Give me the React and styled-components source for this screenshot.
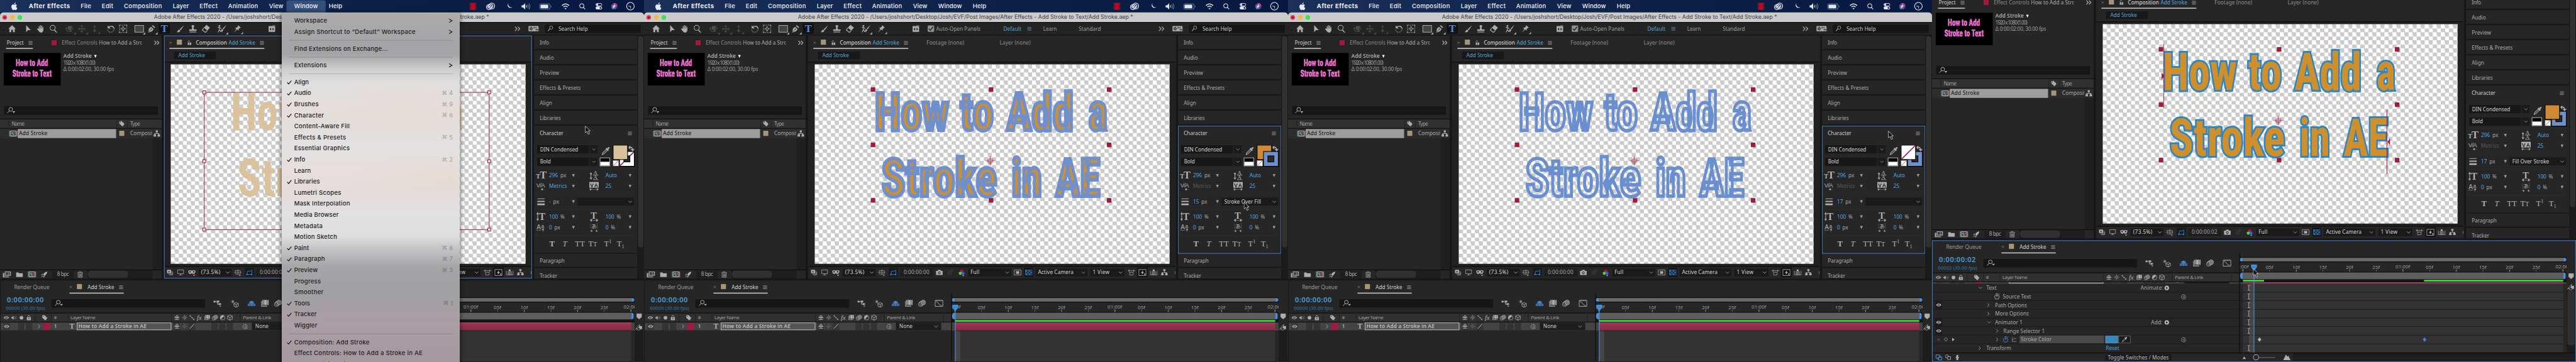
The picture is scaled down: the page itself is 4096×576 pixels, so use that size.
import React, { useLayoutEffect, useRef } from 'react';
import styled, { createGlobalStyle, css } from 'styled-components';

const Global = createGlobalStyle`
  html, body { margin: 0; padding: 0; background: #1b1b1b; overflow: hidden; }
  * { box-sizing: border-box; }
`;

const ui = "'Noto Sans', 'Open Sans', 'Liberation Sans', sans-serif";
const mac = "Inter, 'Liberation Sans', sans-serif";
const blue = '#52a5de';
const focusBlue = '#3f79bd';
const sand = '#a3967b';
const crimson = '#9e1b3c';
const soft = '#9c9c9c';

/* ---------- shared parts ---------- */

const Viewport = styled.div`
  width: 4096px;
  height: 576px;
  overflow: hidden;
`;
const Strip = styled.div`
  display: flex;
  width: 7680px;
  height: 1080px;
  transform: scale(0.533333);
  transform-origin: 0 0;
  font-family: ${ui};
`;

const steps = (x) =>
  x.map((v, i) => (i < x.length - 1 ? `${x[i + 1] - v}px` : 'minmax(0, 1fr)')).join(' ');

/* A single-line grid whose columns begin at the listed stops. */
const Track = styled.div`
  display: grid;
  grid-template-columns: ${(p) => steps(p.$x)};
  grid-template-rows: 100%;
  align-items: center;
  justify-items: start;
  padding-left: ${(p) => p.$x[0]}px;
  height: ${(p) => (p.$h ? `${p.$h}px` : '100%')};
  width: 100%;
  flex: none;
`;

const Word = styled.span`
  display: inline-block;
  flex: none;
  font-family: ${(p) => p.$f || ui};
  font-size: ${(p) => p.$s || 15.5}px;
  font-weight: ${(p) => p.$b || 400};
  color: ${(p) => p.$c || '#a9a9a9'};
  line-height: 1.3;
  white-space: pre;
  ${(p) => p.$clip && css`width: ${p.$clip}px; overflow: hidden;`}
`;

/* Text tracked so that it spans the width w. */
function T({ w, children, ...rest }) {
  const ref = useRef(null);
  useLayoutEffect(() => {
    const el = ref.current;
    if (!w || !el) return;
    el.style.letterSpacing = '0px';
    const n = el.textContent.length;
    el.style.letterSpacing = `${(w - el.offsetWidth) / n}px`;
  }, [w, children]);
  return <Word ref={ref} {...rest}>{children}</Word>;
}

const Svg = styled.svg`
  width: ${(p) => p.$w}px;
  height: ${(p) => p.$h}px;
  margin-left: ${(p) => (p.$flow ? 0 : -p.$w / 2)}px;
  color: ${(p) => p.$c};
  overflow: visible;
  flex: none;
  display: block;
`;

const Box = styled.div`
  display: flex;
  align-items: center;
  justify-content: ${(p) => p.$j || 'center'};
  width: ${(p) => p.$w}px;
  height: ${(p) => p.$h}px;
  margin-left: ${(p) => (p.$mid ? -p.$w / 2 : 0)}px;
  padding: ${(p) => p.$p || 0};
  background: ${(p) => p.$bg || '#1a1a1a'};
  border: 1px solid ${(p) => p.$line || 'transparent'};
  border-radius: ${(p) => (p.$r === undefined ? 3 : p.$r)}px;
  flex: none;
`;

const Rule = styled.i`
  width: 2px;
  height: ${(p) => p.$h || 30}px;
  background: ${(p) => p.$c || '#1a1a1a'};
  border-right: 1px solid #333;
`;

const st = (w = 2) => ({ fill: 'none', stroke: 'currentColor', strokeWidth: w });
const K = '#242424';

const icons = {
  apple: <g><path d="M16.5 12.600c0-2.500 2-3.600 2.100-3.700-1.200-1.700-3-1.900-3.600-2-1.500-.1-3 .9-3.700.9-.8 0-2-.9-3.200-.9C6.300 7 4.500 8 3.600 9.700c-1.900 3.200-.5 8 1.300 10.600.9 1.300 2 2.700 3.400 2.700 1.300-.1 1.900-.9 3.500-.9s2.100.9 3.500.8c1.500 0 2.400-1.300 3.300-2.600 1-1.500 1.500-2.900 1.500-3-.1 0-3.600-1.200-3.600-4.700z" /><path d="M14 5c.7-.9 1.200-2.200 1.100-3.500-1.100.1-2.400.8-3.200 1.700-.7.8-1.300 2.100-1.100 3.300 1.200.1 2.500-.6 3.200-1.500z" /></g>,
  film: <g><rect x="1" y="1" width="22" height="22" fill="#3b3038" /><rect x="5" y="2" width="14" height="20" fill="#c4002b" /><path d="M5 11.500h14" stroke="#5d1530" strokeWidth="1.500" /><path d="M3 3v20M21 3v20" stroke="#11131f" strokeWidth="1.800" strokeDasharray="2 2.500" /></g>,
  cloud: <g {...st(2.2)}><circle cx="8" cy="14" r="6.800" /><circle cx="15.500" cy="11" r="8" /><path d="M18.500 13.500c-1.500 2.500-5 2.500-6.500.500L8.500 11c-2-1.500-4.500.5-3.800 2.800 1 2.700 4 1.800 5.300.2" /><path d="M11 9c1.500-2.500 5-3 6.800-1 2 2.500.7 5.500-2.300 5.500" /></g>,
  moon: <path d="M9 2a9 9 0 1 0 13 13A10 10 0 0 1 9 2z" />,
  speaker: <g><path d="M0 9h4l6-6v18l-6-6H0z" /><path d="M13 9q2 3 0 6" {...st(1.8)} /><path d="M16.500 6.500q4 5.500 0 11M20 4q6 8 0 16" {...st(1.8)} opacity=".5" /></g>,
  battery: <g><rect x="1" y="4.500" width="31" height="16" rx="4.500" {...st(1.5)} opacity=".6" /><rect x="3.500" y="7" width="23" height="11" rx="2.500" /><path d="M34.500 9.500q3 3 0 6z" opacity=".6" /></g>,
  wifi: <g {...st(3)}><path d="M1.500 9.500q10.500-9.500 21 0" /><path d="M6 14q6-5.500 12 0" /><path d="M10 18.500q2-1.500 4 0l-2 2z" fill="currentColor" strokeWidth="1.500" /></g>,
  lens: <g {...st(2.4)}><circle cx="10" cy="10" r="7.500" /><path d="M15.500 15.500L22 22" /></g>,
  control: <g {...st(2)}><rect x="2" y="2.500" width="20" height="8.500" rx="4.200" /><circle cx="6.500" cy="6.700" r="2.600" fill="currentColor" /><rect x="1" y="13" width="22" height="10" rx="5" fill="currentColor" strokeWidth="0" /><circle cx="17.500" cy="18" r="3" fill="#10234a" strokeWidth="0" /></g>,
  siri: <g><circle cx="12" cy="12" r="11" fill="#5a3a7c" /><path d="M12 1a11 11 0 0 1 10 7l-10 4z" fill="#c73a8c" /><path d="M12 23a11 11 0 0 1-10-7l10-4z" fill="#2a8a9c" /><path d="M12 2l1 8 9 1-9 2 4 8-5-6-7 5 4-7-7-3 8 0z" fill="#e6e8f8" /></g>,
  clock: <g {...st(2)}><circle cx="12" cy="12" r="11" /><path d="M6 12h6.500v7" strokeWidth="1.500" /></g>,
  home: <path d="M1 12L12 1l11 11h-3v10h-5.500v-7h-5v7H4V12z" />,
  select: <path d="M6 1v21l5.500-6 8-.5z" />,
  hand: <g stroke="currentColor" strokeWidth="2.600" strokeLinecap="round" strokeLinejoin="round"><path d="M8 12V5M11.800 11V2.500M15.500 11V3.500M19 12V7" /><path fill="currentColor" d="M8 12h11v3c-.5 4-2 7-5.500 7s-5-2-6.500-4.500L3 12.500c1.500-1 3 .5 5 2z" /></g>,
  zoom: <g {...st(2)}><circle cx="10" cy="9" r="7.500" /><path d="M15 15l7 8" strokeWidth="3" /></g>,
  find: <g {...st(2)}><circle cx="14" cy="8" r="6" /><path d="M10 12l-8 9" strokeWidth="2.500" /></g>,
  findMenu: <g><g {...st(2)}><circle cx="12" cy="8" r="6" /><path d="M8 12l-7 8" /></g><path d="M17 14h10l-5 6z" /></g>,
  orbit: <g><circle cx="12" cy="10" r="6" /><path d="M2 11c0 9 9 10 13 8M14 5c6-1 9 5 6 9" {...st(2)} /><path d="M14 14v8l6-4z" /><path d="M0 12l2.500-5 3 5z" /></g>,
  pan: <path d="M12 0l4 5.500h-3V11h5.500V8L24 12l-5.500 4v-3H13v5.500h3L12 24l-4-5.500h3V13H5.500v3L0 12l5.500-4v3H11V5.500H8z" />,
  dolly: <path d="M12 0l4 6h-3v10h5l-6 8-6-8h5V6H8z" />,
  rotate: <g><path d="M3 2v9h9z" /><path d="M6 8c4-6 14-5 16 3" {...st(2.5)} /><path d="M22 12c0 12-16 14-19 3" {...st(2)} strokeDasharray="2 2.300" /></g>,
  anchorBox: <g><path d="M1 5V1h4M8 1h3M14 1h3M19 1h4v4M23 8v3M23 14v3M23 19v4h-4M16 23h-3M10 23H7M5 23H1v-4M1 16v-3M1 11V8" {...st(2)} /><path d="M12 4l3 3.500H9zM12 20l3-3.500H9zM4 12l3.500-3v6zM20 12l-3.500-3v6z" /><circle cx="12" cy="12" r="3.200" {...st(1.5)} /></g>,
  shape: <rect x="-1" y="2" width="26" height="20" fill="#444" stroke="currentColor" strokeWidth="1.800" />,
  pen: <g><path d="M2 23l2.500-12 6-5 7.500 7-5 6.500z" /><path d="M13 3.500L20 10l2.500-2.500L15.500 1z" /><path d="M3 22l7-8" stroke={K} strokeWidth="1.300" /><circle cx="11" cy="13" r="1.800" fill={K} /></g>,
  brush: <g><path d="M23 1L13 16l-3.500-2.500z" /><path d="M8.500 14.500l3.500 3c-1 4-6 5.500-11 4.500 3-2 3-7 7.500-7.500z" /></g>,
  stamp: <g><circle cx="12" cy="4.500" r="4" /><path d="M10 7h4l1 6.500h8V18H1v-4.500h8zM2 20h20v2.500H2z" /></g>,
  eraser: <g><path d="M13 1l10 8-7.500 8.500-10-8z" /><path d="M5.500 9.500L1 16l9 6.500 5.500-5" {...st(2)} /></g>,
  roto: <g><circle cx="5" cy="4" r="2.500" /><path d="M5 7v8l-4 7M5 15l4 6M0 9l5-1 5 4" {...st(2)} /><path d="M25 1l-8 13-3-2z" /><path d="M13 13l3 3c-1 4-4 5.500-8 5 3-2 1-7 5-8z" /></g>,
  pin: <path d="M14 0l9 8-3 1-4.500 4.500.5 5-5-4.500L1 24l7-11-4-4.500 5.500-.5 4-4z" />,
  snap: <g><path d="M2 4h10l2-2h8v20H2z" /><path d="M10 9v9l-5-4.500zM14 9v9l5-4.500z" fill={K} /><path d="M12 4h10" stroke={K} /></g>,
  check: <g><rect x="1" y="1" width="22" height="22" rx="3" /><path d="M5 12l5 5.500L19 6" stroke={K} strokeWidth="3" fill="none" /></g>,
  gears: <g><rect x="-5" y="3" width="34" height="18" rx="1" /><circle cx="4" cy="12" r="3.500" fill="none" stroke={K} strokeWidth="2.500" /><path d="M4 5.500v13M-2.500 12h13M-.5 7.500l9 9M8.500 7.500l-9 9" stroke={K} strokeWidth="1.500" /><circle cx="4" cy="12" r="2" fill="currentColor" /><path d="M15 9h9M27 15.500h-9" stroke={K} strokeWidth="2" /><path d="M15 5.500L11.500 9 15 12.500zM23 12l4 3.500-4 3.500z" fill={K} /></g>,
  burger: <path d="M2 5h20M2 12h20M2 19h20" {...st(2.6)} />,
  more: <path d="M2 4l8 8-8 8M13 4l8 8-8 8" {...st(3)} />,
  cross: <path d="M4 4l16 16M20 4L4 20" {...st(2.4)} />,
  lockOpen: <g><rect x="3" y="11" width="18" height="12" /><path d="M5 11V6c0-6 9-6 9 0" {...st(2.5)} /><rect x="10.500" y="14" width="3" height="6" fill={K} /></g>,
  lock: <g><rect x="3" y="10" width="18" height="13" /><path d="M7 10V6c0-5.500 10-5.500 10 0v4" {...st(2.5)} /><rect x="10.500" y="13" width="3" height="6" fill={K} /></g>,
  tag: <g><path d="M2 3l9-2 12 12-8 10L2 11z" /><circle cx="6" cy="6" r="2" fill="#303030" /></g>,
  compItem: <g><rect x="-3" y="1" width="30" height="22" fill="#aaa" /><path d="M0 2v21M24 2v21" stroke="#303030" strokeWidth="3" strokeDasharray="3 2.500" /><rect x="3.500" y="4" width="17" height="15" fill="#303030" /><circle cx="9" cy="10" r="4" fill="#4aa0e0" /><rect x="13" y="6" width="7" height="8" fill="#c62b48" /><path d="M7 18l5-9 5 9z" fill="#3fc04a" stroke="#303030" /></g>,
  flow: <path d="M8 0h8v7h-3v4h8v4h3v8h-9v-8h3v-2H6v2h3v8H0v-8h3v-4h8V7H8z" />,
  footage: <g><path d="M-3 7h5v13h18v3H-3zM4 1h23v16H4z" /><rect x="7" y="4" width="17" height="10" fill={K} /><path d="M9 9h3M14 7h8M14 11h8" {...st(1.8)} /></g>,
  folder: <path d="M-1 4h9l2 3h15v15H-1z" />,
  rocket: <path d="M24 1c-7 1-13 6-15 12l4 4C20 14 23 8 24 1zM8 8L1 14l6-1zM16 17l-6 7V18zM6 15l-4 7 7-4z" />,
  trash: <g {...st(2)}><path d="M1 5h22M8 4V1h8v3M4 6v17h16V6" /><path d="M9 9v11M12.500 9v11M16 9v11" /></g>,
  renderCtl: <g><path d="M0 1h17v15H0z" /><path d="M6 5v8l6-4z" fill={K} /><path d="M20 6v13H6M24 10v13H10" {...st(2)} /></g>,
  monitor: <g {...st(2)}><rect x="0" y="2" width="24" height="16" /><path d="M12 18v4M6 23h12" /></g>,
  mask: <g><path d="M-2 5c5-3 10-2 14 0 4-2 9-3 14 0 1 7-3 13-8 13-3 0-4-3-6-3s-3 3-6 3c-5 0-9-6-8-13z" /><circle cx="5" cy="9" r="3" fill={K} /><circle cx="19" cy="9" r="3" fill={K} /><path d="M16 21h9l-4.500 5z" /></g>,
  guides: <g><path d="M2 4h20v14H2zM12 0v22M-2 11h28" {...st(1.7)} /><path d="M16 22h8l-4 5z" /></g>,
  maskPath: <g><path d="M1 21L5 7h11l6-5v19z" {...st(2)} /><path d="M-1 19h5v5h-5zM19 19h5v5h-5z" /></g>,
  camera: <g><path d="M-2 6h7l2-4h10l2 4h7v17H-2z" /><circle cx="12" cy="14" r="5.500" fill={K} /><circle cx="12" cy="14" r="3" /></g>,
  snapshot: <g {...st(2)}><circle cx="9" cy="14" r="7" /><circle cx="9" cy="14" r="2.500" /><circle cx="18" cy="5" r="4" /></g>,
  rgb: <g><circle cx="12" cy="7" r="7" fill="#d0102c" /><circle cx="6" cy="16" r="7" fill="#3fdc3a" /><circle cx="18" cy="16" r="7" fill="#4a58e8" /><path d="M14 24h10l-5 5z" fill="#aaa" /></g>,
  roi: <g><rect x="-3" y="1" width="30" height="22" {...st(2.2)} /><rect x="5" y="6" width="14" height="12" /></g>,
  grid: <g><rect x="-3" y="1" width="30" height="22" fill="#16263a" stroke="currentColor" strokeWidth="2" /><path d="M-2 2h7v7h-7zM12 2h7v7h-7zM5 9h7v6H5zM19 9h7v6h-7zM-2 15h7v7h-7zM12 15h7v7h-7z" opacity=".75" /></g>,
  aspect: <g><rect x="4" y="11" width="16" height="12" {...st(2)} /><path d="M-2 4h28M-2 4l4-4v8zM26 4l-4-4v8z" {...st(2)} /></g>,
  fast: <g><rect x="-2" y="0" width="28" height="24" {...st(2)} /><path d="M14 3L6 14h5l-2 8 9-12h-5z" /><path d="M17 17h8l-4 6z" /></g>,
  timeline: <g><path d="M-2 5v18h28V5" {...st(2)} /><path d="M6 8v14M12 10v12M18 8v14" {...st(3)} /><rect x="8" y="0" width="8" height="8" /></g>,
  half: <path d="M14 1a12 12 0 0 0 0 22z" />,
  dropper: <g><path d="M2 22l2-5L14 7l3 3L7 20z" {...st(2)} /><path d="M12 5l7 7 2-2-1.500-2L23 4c1-3-1-4-3-3l-4 3.500L14 3z" /></g>,
  eye: <g><path d="M0 12q12-14 24 0-12 14-24 0z" /><circle cx="12" cy="12" r="5" fill={K} /><circle cx="12" cy="12" r="2.500" /></g>,
  dot: <circle cx="12" cy="12" r="8" />,
  miniFlow: <g><path d="M-2 6h12M10 6v10h5" {...st(2.2)} /><path d="M-4 3h7v6h-7zM8 2h9v7H8zM14 12h10v6H14z" /><path d="M17 21h8l-4 5z" /></g>,
  draft3d: <g {...st(2)}><path d="M6 0v12M0 6h12M2 2l8 8M10 2l-8 8" strokeWidth="1.600" /><path d="M10 13l8-4 8 4v9l-8 4-8-4zM10 13l8 4 8-4M18 17v9" /></g>,
  shy: <g><path d="M3 12C3 0 21 0 21 12zM10 12h4v6h-4z" /><path d="M-2 13h28v9H-2z" opacity=".7" /></g>,
  shySm: <g><path d="M4 11C4-1 20-1 20 11z" {...st(2.5)} /><path d="M0 13h24M12 2v20M2 21h20" {...st(3)} /></g>,
  frames: <g><path d="M4 0h22v18H4z" /><path d="M9 1v17M21 1v17" stroke={K} strokeWidth="2.500" strokeDasharray="2.500 2" /><path d="M1 4v18h20" {...st(2.5)} /></g>,
  blur: <g><circle cx="8" cy="15" r="8" {...st(1.8)} /><circle cx="12" cy="12" r="8" {...st(1.8)} /><circle cx="17" cy="9" r="8.500" fill="#777" stroke="currentColor" strokeWidth="1.800" /></g>,
  graph: <g {...st(2)}><path d="M-1 3h26v20H-1zM3 0v4M9 0v4M15 0v4M21 0v4" /><path d="M2 7c9 0 8 13 19 13" /></g>,
  sun: <g {...st(2)}><circle cx="12" cy="12" r="4" /><path d="M12 0v6M12 18v6M0 12h6M18 12h6M4 4l4 4M16 16l4 4M20 4l-4 4M8 16l-4 4" /></g>,
  dash: <path d="M1 2l6 5M9 10l6 5M17 18l6 4" {...st(4)} />,
  slash: <path d="M1 23L23 1" {...st(3)} />,
  halfDisc: <g><circle cx="12" cy="12" r="10" {...st(2)} /><path d="M19 5A10 10 0 0 0 5 19z" /></g>,
  cube: <path d="M2 6l10-5 10 5v12l-10 5-10-5zM2 6l10 6 10-6M12 12v11" {...st(2.2)} />,
  whip: <path d="M14 12c0-3-5-3-5 1s7 5 9 0-2-11-9-10S-1 14 3 19s15 5 19-3" {...st(2.2)} />,
  down: <path d="M3 8l9 8 9-8" {...st(2.6)} />,
  right: <path d="M8 3l8 9-8 9" {...st(2.6)} />,
  menuRight: <path d="M5 3l15 9-15 9" {...st(3.5)} />,
  tri: <path d="M4 4h16l-8 17z" />,
  tick: <path d="M2 13l7 7L22 4" {...st(3.6)} />,
  marker: <path d="M1 0h22v15L12 24 1 15z" />,
  shapes: <g><path d="M9 6h15v13H9z" /><path d="M15 0L-1 18h12z" fill="#1d1d1d" stroke="currentColor" strokeWidth="2" /><circle cx="11" cy="18" r="5" fill="#1d1d1d" stroke="currentColor" strokeWidth="2" /></g>,
  watch: <g {...st(2.2)}><circle cx="12" cy="14" r="8.500" /><path d="M12 14V5M8 1h8M18 5l3-3" /></g>,
  axis: <path d="M2 2v20h20M5 14c5 0 4-8 8-8 3 0 3 6 8 2" {...st(2)} />,
  play: <g><circle cx="12" cy="12" r="10" /><path d="M9 6l8 6-8 6z" fill={K} /></g>,
  prev: <path d="M20 2v20L5 12z" />,
  next: <path d="M4 2v20l15-10z" />,
  key: <path d="M12 3l8 9-8 9-8-9z" {...st(2)} />,
  keyFull: <path d="M12 0l10 12-10 12L2 12z" />,
  layersBlue: <g {...st(2.5)}><rect x="0" y="1" width="14" height="14" /><path d="M6 15v4h14V6h-6" /><rect x="11" y="11" width="13" height="12" fill="#162c46" /></g>,
  toggles: <g {...st(2.5)}><rect x="1" y="1" width="12" height="14" rx="5" /><rect x="10" y="9" width="13" height="13" fill={K} /></g>,
  braces: <path d="M10 1v22M14 1v22M5 12h5M14 12h5" {...st(4)} />,
  smallHill: <path d="M5 19l7-10 7 10z" />,
  bigHill: <path d="M-1 22L9 2l5 8 3-4 8 16z" />,
  none: null,
};

function Icon({ n, s = 20, h, c = '#adadad', flow, corner, vb = '0 0 24 24' }) {
  return (
    <Svg $w={s} $h={h || s} $c={c} $flow={flow} viewBox={vb} fill="currentColor">
      {icons[n]}
      {corner && <path d="M30 29h-7l7-7z" />}
    </Svg>
  );
}

const Select = ({ w, h = 26, tw, label, gap = 8, chev = 12 }) => (
  <Box $w={w} $h={h} $j="space-between" $p={`0 ${chev - 7}px 0 ${gap}px`} $line="#303030">
    <T w={tw} $c="#d6d6d6">{label}</T>
    <Icon n="down" s={14} flow c="#b0b0b0" />
  </Box>
);

/* ---------- menu bar, title bar, toolbar ---------- */

const MenuBar = styled.div`
  height: 37px;
  flex: none;
  background: linear-gradient(90deg, #1b305a, #0d2148 55%, #06183f);
`;
const MenuWord = styled.div`
  display: flex;
  align-items: center;
  height: 36px;
  padding: 0 23px;
  margin-left: -23px;
  border-radius: 6px;
  background: ${(p) => (p.$on ? '#34507a' : 'transparent')};
`;
const TitleHolder = styled.div`
  height: 29px;
  flex: none;
  background: #0b1c3e;
`;
const TitleBar = styled.div`
  height: 29px;
  background: #cbcbcd;
  border-radius: 10px 10px 0 0;
`;
const Light = styled.i`
  width: 14px;
  height: 14px;
  margin-left: -7px;
  border-radius: 50%;
  background: ${(p) => p.$c};
  display: flex;
  align-items: center;
  justify-content: center;
  &::after {
    content: '';
    width: 6px;
    height: 6px;
    border-radius: 50%;
    background: ${(p) => (p.$dot ? '#6b0a18' : 'transparent')};
  }
`;
const ToolBar = styled.div`
  height: 40px;
  flex: none;
  background: #242424;
  border-top: 2px solid #0c0c0c;
  border-bottom: 3px solid #171717;
`;
const Grip = styled.i`
  width: 5px;
  height: 26px;
  background: repeating-linear-gradient(#3a3a3a 0 1px, #1c1c1c 1px 3px);
`;
const GlyphT = styled.span`
  font: ${(p) => (p.$i ? 'italic ' : '')}${(p) => (p.$b ? 'bold ' : '')}${(p) => p.$s || 30}px/1 'Liberation Serif', serif;
  color: ${(p) => p.$c || '#b0b0b0'};
  white-space: nowrap;
  ${(p) => p.$mid && css`transform: translateX(-50%);`}
  sup, sub { font-size: 60%; line-height: 0; }
  small { font-size: 78%; }
`;
const SearchWord = styled.div`
  padding-left: 14px;
`;

const menus = [
  ['After Effects', 123, 700], ['File', 31], ['Edit', 35], ['Composition', 114], ['Layer', 49],
  ['Effect', 54], ['Animation', 90], ['View', 43], ['Window', 71], ['Help', 41],
];

function TopBars({ menuOpen }) {
  const dim = '#4b4b4b';
  return (
    <>
      <MenuBar>
        <Track $x={[43, 86, 240.5, 303.5, 369.5, 515, 595, 680, 802, 877, 980, 1410, 1462, 1518, 1568, 1627, 1686, 1736, 1785, 1831, 1879]}>
          <Icon n="apple" s={25} c="#e8ebf2" />
          {menus.map(([m, w, b]) => (
            <MenuWord key={m} $on={menuOpen && m === 'Window'}>
              <T w={w} $f={mac} $s={18} $b={b || 500} $c="#eef0f6">{m}</T>
            </MenuWord>
          ))}
          <Icon n="film" s={24} />
          <Icon n="cloud" s={26} c="#e4e8f0" />
          <Icon n="moon" s={21} c="#e4e8f0" />
          <Icon n="speaker" s={26} c="#e4e8f0" />
          <Icon n="battery" s={38} h={24} c="#e4e8f0" vb="0 0 38 24" />
          <Icon n="wifi" s={24} c="#e4e8f0" />
          <Icon n="lens" s={20} c="#e4e8f0" />
          <Icon n="control" s={21} c="#e4e8f0" />
          <Icon n="siri" s={21} />
          <Icon n="clock" s={25} c="#e4e8f0" />
        </Track>
      </MenuBar>
      <TitleHolder>
        <TitleBar>
          <Track $x={[14, 37, 59, 459]}>
            <Light $c="#e5405e" $dot />
            <Light $c="#f4b942" />
            <Light $c="#3fe24c" />
            <T w={999} $f={mac} $s={16.5} $c="#424244">
              Adobe After Effects 2020 - /Users/joshshort/Desktop/Josh/EVF/Post Images/After Effects - Add Stroke to Text/Add Stroke.aep *
            </T>
          </Track>
        </TitleBar>
      </TitleHolder>
      <ToolBar>
        <Track $x={[7, 36, 68, 84, 121, 159, 184, 207, 244, 282, 307, 330, 367, 394, 415, 452, 490, 515, 538, 575, 614, 637, 661, 687, 708, 765, 810, 855, 871, 1036, 1071.5, 1149, 1190, 1296, 1543, 1565, 1590, 1623]}>
          <Grip />
          <Icon n="home" s={24} />
          <Rule />
          <Icon n="select" s={24} />
          <Icon n="hand" s={24} />
          <Icon n="zoom" s={24} />
          <Rule />
          <Icon n="orbit" s={25} c={dim} corner />
          <Icon n="pan" s={24} c={dim} corner />
          <Icon n="dolly" s={22} c={dim} corner />
          <Rule />
          <Icon n="rotate" s={24} />
          <Icon n="anchorBox" s={24} />
          <Rule />
          <Icon n="shape" s={24} corner />
          <Icon n="pen" s={24} corner />
          <Box $w={34} $h={31} $mid $bg="#101214"><GlyphT $s={31} $b $c="#4a90e2">T</GlyphT></Box>
          <Rule />
          <Icon n="brush" s={24} />
          <Icon n="stamp" s={24} />
          <Icon n="eraser" s={25} />
          <Rule />
          <Icon n="roto" s={25} corner />
          <Rule />
          <Icon n="pin" s={22} corner />
          <Rule />
          <Icon n="snap" s={23} />
          <Icon n="check" s={21} c="#8e8e8e" />
          <T w={132} $c={soft}>Auto-Open Panels</T>
          <Rule />
          <T w={53} $c={blue}>Default</T>
          <Icon n="burger" s={14} c={blue} />
          <T w={41} $c={soft}>Learn</T>
          <T w={66} $c={soft}>Standard</T>
          <Icon n="more" s={18} c="#b0b0b0" />
          <Rule />
          <Icon n="gears" s={21} />
          <Box $w={289} $h={28} $j="flex-start" $p="0 0 0 8px" $bg="#161616" $line="#2c2c2c">
            <Icon n="find" s={19} flow />
            <SearchWord><T w={88} $c="#c8c8c8">Search Help</T></SearchWord>
          </Box>
        </Track>
      </ToolBar>
    </>
  );
}

/* ---------- project panel ---------- */

const Panel = styled.div`
  display: flex;
  flex-direction: column;
  width: ${(p) => p.$w}px;
  height: 100%;
  background: #262626;
  overflow: hidden;
  flex: none;
`;
const TabLine = styled.div`
  display: flex;
  height: ${(p) => p.$h}px;
  padding-left: ${(p) => p.$l}px;
  flex: none;
`;
const Tab = styled.div`
  width: ${(p) => p.$w}px;
  height: 100%;
  padding-top: ${(p) => p.$t || 4}px;
  border-bottom: 3px solid ${(p) => (p.$on ? '#c4c4c4' : 'transparent')};
  flex: none;
`;
const Swatch = styled.i`
  width: 16px;
  height: 16px;
  background: ${(p) => p.$c || sand};
  outline: 1px solid #1a1a1a;
  margin-top: ${(p) => p.$up || 0}px;
`;
const InfoBlock = styled.div`
  display: flex;
  gap: 8px;
  height: 170px;
  padding: 12px 0 0 11px;
  flex: none;
`;
const Thumb = styled.div`
  width: 170px;
  height: 97px;
  background: #000;
`;
const InfoText = styled.div`
  display: flex;
  flex-direction: column;
  span { line-height: 19.5px; }
`;
const Inline = styled.div`
  display: flex;
  align-items: center;
  gap: ${(p) => p.$g || 0}px;
`;
const Inset = styled.div`
  padding-left: ${(p) => p.$l}px;
  height: ${(p) => p.$h}px;
  flex: none;
`;
const HeadRow = styled.div`
  height: ${(p) => p.$h}px;
  background: #303030;
  border-top: 2px solid #0a0a0a;
  border-bottom: 2px solid #0a0a0a;
  flex: none;
`;
const ItemRow = styled.div`
  height: 28px;
  background: #2d2d2d;
  flex: none;
`;
const ListBody = styled.div`
  display: flex;
  justify-content: flex-end;
  flex: 1;
`;
const Gutter = styled.div`
  width: ${(p) => p.$w}px;
  height: 100%;
  background: #1f1f1f;
`;
const FootRow = styled.div`
  height: 27px;
  border-top: 2px solid #0c0c0c;
  flex: none;
`;
const ScrollWell = styled.div`
  width: 194px;
  height: 25px;
  background: #1e1e1e;
  padding: 1px;
`;
const Pill = styled.div`
  width: 120px;
  height: 22px;
  border-radius: 10px;
  background: #303030;
`;

const heavy = "'Liberation Sans Narrow', 'Roboto Condensed', 'Liberation Sans', sans-serif";

function ProjectPanel() {
  return (
    <Panel $w={482}>
      <TabLine $h={40} $l={18}>
        <Tab $on $w={80} $t={6}>
          <Track $x={[2, 73]}>
            <T w={51} $c="#cfcfcf">Project</T>
            <Icon n="burger" s={14} c="#b0b0b0" />
          </Track>
        </Tab>
        <Tab $w={384} $t={6}>
          <Track $x={[55, 86, 197, 325, 369]}>
            <Swatch $c={crimson} />
            <T w={106} $c="#8a8a8a">Effect Controls</T>
            <Word $clip={128}>How to Add a Stroke in AE</Word>
            <Rule />
            <Icon n="more" s={17} c="#b0b0b0" />
          </Track>
        </Tab>
      </TabLine>
      <InfoBlock>
        <Thumb>
          <svg width="170" height="97" viewBox="0 0 170 97">
            <g fontFamily={heavy} fontWeight="700" fontSize="26" fill="#f0b0c6" stroke="#d23fc4" strokeWidth="1.200">
              <text x="36" y="38" textLength="96" lengthAdjust="spacingAndGlyphs">How to Add</text>
              <text x="26" y="70" textLength="117" lengthAdjust="spacingAndGlyphs">Stroke to Text</text>
            </g>
          </svg>
        </Thumb>
        <InfoText>
          <Inline $g={3}>
            <T w={85} $b={600}>Add Stroke</T>
            <Icon n="tri" s={15} flow c="#fff" h={12} />
          </Inline>
          <T w={125} $c={soft}>1920 x 1080 (1.00)</T>
          <T w={151} $c={soft}>Δ 0:00:02:00, 30.00 fps</T>
        </InfoText>
      </InfoBlock>
      <Inset $l={11} $h={38}>
        <Box $w={461} $h={28} $j="flex-start" $p="0 0 0 9px" $bg="#161616" $line="#2d2d2d">
          <Icon n="findMenu" s={22} flow />
        </Box>
      </Inset>
      <HeadRow $h={30}>
        <Track $x={[26, 34.5, 347, 363, 379, 388]}>
          <Rule $h={22} />
          <T w={37} $c={soft}>Name</T>
          <Rule $h={22} />
          <Icon n="tag" s={18} />
          <Rule $h={22} />
          <T w={29} $c={soft}>Type</T>
        </Track>
      </HeadRow>
      <ItemRow>
        <Track $x={[39, 52.5, 355, 388, 467]}>
          <Icon n="compItem" s={19} />
          <Box $w={293} $h={27} $r={0} $bg="#9d9d9d" $j="flex-start" $p="0 0 0 3px">
            <T w={85} $b={500} $c="#1e1e1e">Add Stroke</T>
          </Box>
          <Swatch />
          <Word $clip={66}>Composition</Word>
          <Icon n="flow" s={19} />
        </Track>
      </ItemRow>
      <ListBody><Gutter $w={27} /></ListBody>
      <FootRow>
        <Track $x={[20, 58, 95, 131, 154, 239, 261]}>
          <Icon n="footage" s={19} />
          <Icon n="folder" s={18} />
          <Icon n="compItem" s={19} />
          <Icon n="rocket" s={20} />
          <Box $w={67} $h={24} $bg="#1e1e1e" $line="#2e2e2e"><T w={34}>8 bpc</T></Box>
          <Icon n="trash" s={18} />
          <ScrollWell><Pill /></ScrollWell>
        </Track>
      </FootRow>
    </Panel>
  );
}

/* ---------- composition panel ---------- */

const Framed = styled(Panel)`
  border: 2px solid ${(p) => (p.$focus ? focusBlue : '#262626')};
`;
const Crumbs = styled.div`
  display: flex;
  align-items: center;
  height: 38px;
  padding-left: 27px;
  flex: none;
`;
const Stage = styled.div`
  height: 610px;
  padding: 6px 0 0 18.5px;
  background: #212121;
  border-top: 2px solid #0a0a0a;
  flex: none;
`;
const Canvas = styled.div`
  width: 1057.5px;
  height: 595px;
  background: repeating-conic-gradient(#cbcbcb 0 25%, #fff 0 50%) 0 0 / 24px 24px;
  svg { display: block; overflow: visible; }
`;
const ViewBar = styled.div`
  flex: 1;
  border-top: 2px solid #0a0a0a;
  background: #262626;
  overflow: hidden;
`;

const words = [
  ['How', 684, 910, 388.5], ['to', 939, 1043, 388.5], ['Add', 1077, 1281, 388.5], ['a', 1321, 1382, 388.5],
  ['Stroke', 705, 1052.5, 585], ['in', 1092, 1187, 585], ['AE', 1223, 1360.5, 585],
];
const looks = {
  plain: { fill: '#dac29d' },
  strokeOver: { fill: '#cf8f2b', stroke: '#6f90cd', strokeWidth: 11 },
  outline: { fill: 'none', stroke: '#6a8fd0', strokeWidth: 10.5 },
  fillOver: { fill: '#cf8f2b', stroke: '#2f86c2', strokeWidth: 11.5, paintOrder: 'stroke' },
};

function Artwork({ look }) {
  const hollow = look === 'plain';
  const handles = hollow
    ? [[608.5, 275.5], [608.5, 481], [608.5, 685], [1458, 275.5], [1458, 481], [1458, 685], [1033, 275.5], [1033, 685]]
    : [[682, 267], [1034, 267], [1386, 267], [682, 432], [1386, 432], [682, 597.5], [1034, 597.5], [1386, 597.5]];
  return (
    <svg width="1057.500" height="595" viewBox="508.500 192 1057.500 595">
      <g fontFamily={heavy} fontWeight="700" fontSize="155" {...looks[look]} strokeLinejoin="miter">
        {words.map(([t, a, b, y]) => (
          <text key={t + a} x={a + 3} y={y} textLength={b - a - 4} lengthAdjust="spacingAndGlyphs">{t}</text>
        ))}
      </g>
      {hollow && <rect x="608.500" y="275.500" width="849.500" height="409.500" fill="none" stroke="#98304f" strokeWidth="2" />}
      {handles.map(([x, y]) => (hollow
        ? <rect key={`${x},${y}`} x={x - 4.5} y={y - 4.5} width="9" height="9" fill="#e8e8e8" stroke="#9c2347" strokeWidth="2" />
        : <g key={`${x},${y}`}><rect x={x - 5} y={y - 5} width="13" height="13" fill="#0004" /><rect x={x - 6.5} y={y - 6.5} width="13" height="13" fill={crimson} /></g>))}
      {!hollow && (
        <g stroke="#a83352" strokeWidth="1.500" fill="none">
          <circle cx="1032" cy="480" r="8" /><circle cx="1032" cy="480" r="5" />
          <path d="M1032 466v28M1018 480h28" />
        </g>
      )}
      {look === 'fillOver' && (
        <path fill={crimson} d="M690 251h1.500v191h-1.500zM684 336l8 11-8 11zM1355 447h2v192h-2zM1365 532l-7 11 7 11z" />
      )}
    </svg>
  );
}

function CompPanel({ focus, look, time }) {
  return (
    <Framed $w={1097} $focus={focus}>
      <TabLine $h={38} $l={14}>
        <Tab $on $w={283}>
          <Track $x={[4, 22, 60, 79.5, 177, 276]}>
            <Icon n="cross" s={9} />
            <Swatch $up={-3} />
            <Icon n="lockOpen" s={14} h={17} />
            <T w={93} $c="#e0e0e0">Composition</T>
            <T w={80} $c={blue}>Add Stroke</T>
            <Icon n="burger" s={14} c="#b0b0b0" />
          </Track>
        </Tab>
        <Tab $w={700}>
          <Track $x={[55, 273]}>
            <T w={112} $c="#8e8e8e">Footage (none)</T>
            <T w={92} $c="#8e8e8e">Layer (none)</T>
          </Track>
        </Tab>
      </TabLine>
      <Crumbs>
        <Box $w={127} $h={25} $j="flex-start" $p="0 0 0 13px" $bg="#181818" $line="#2b2b2b">
          <T w={80} $c={blue}>Add Stroke</T>
        </Box>
      </Crumbs>
      <Stage><Canvas><Artwork look={look} /></Canvas></Stage>
      <ViewBar>
        <Track $x={[16, 48, 81, 100, 218, 253, 271, 390, 423, 456, 474, 623, 656, 675, 838.5, 962, 995, 1029, 1061, 1083, 1096]}>
          <Icon n="renderCtl" s={17} />
          <Icon n="monitor" s={17} />
          <Icon n="mask" s={18} />
          <Select w={101} label="(73.5%)" tw={58} />
          <Icon n="guides" s={18} />
          <Box $w={28} $h={27} $mid $bg="#161b22"><Icon n="maskPath" s={17} flow c="#4a90d9" /></Box>
          <Box $w={102} $h={26} $bg="#1e1e1e" $line="#303030"><T w={77}>{time}</T></Box>
          <Icon n="camera" s={17} />
          <Icon n="snapshot" s={19} c="#404040" />
          <Icon n="rgb" s={16} />
          <Select w={131} label="Full" tw={27} />
          <Icon n="roi" s={16} />
          <Box $w={28} $h={27} $mid $bg="#131313"><Icon n="grid" s={16} flow c="#3c7fc8" /></Box>
          <Select w={157} label="Active Camera" tw={106} />
          <Select w={105} label="1 View" tw={50} />
          <Icon n="aspect" s={16} />
          <Box $w={32} $h={29} $mid $bg="#131313"><Icon n="fast" s={18} flow c="#b8b8b8" /></Box>
          <Icon n="timeline" s={17} />
          <Icon n="flow" s={19} />
          <Rule $h={18} />
          <Icon n="half" s={20} />
        </Track>
      </ViewBar>
    </Framed>
  );
}

/* ---------- right column ---------- */

const SideColumn = styled.div`
  display: flex;
  flex: 1;
  overflow: hidden;
`;
const Stack = styled.div`
  display: flex;
  flex-direction: column;
  width: 308px;
  height: 725px;
  overflow: hidden;
  background: #262626;
`;
const Fold = styled.div`
  display: flex;
  align-items: center;
  height: ${(p) => p.$h || 45}px;
  padding: 3px 0 0 17px;
  border-bottom: 4px solid #181818;
  flex: none;
`;
const CharBox = styled.div`
  height: 382px;
  border: 2px solid ${(p) => (p.$focus ? focusBlue : '#262626')};
  border-bottom-color: ${(p) => (p.$focus ? focusBlue : '#151515')};
  flex: none;
`;
const FontBlock = styled.div`
  display: flex;
  height: 85px;
  padding: 14px 0 0 6px;
`;
const FontSelects = styled.div`
  display: flex;
  flex-direction: column;
  gap: 10px;
`;
const CharGroup = styled.div`
  height: ${(p) => p.$h}px;
  margin: 0 9px 0 0;
  border-top: 1px solid #323232;
`;
const SideScroll = styled.div`
  width: 20px;
  height: 100%;
  padding: 2px 2px 0 2px;
  background: #1b1b1b;
`;
const SideThumb = styled.div`
  height: 630px;
  border-radius: 7px;
  background: #303030;
`;

function Wells({ fill, stroke, strokeFront }) {
  const slash = (x, y, w, h) => <path d={`M${x} ${y + h}L${x + w} ${y}`} stroke="#a0123c" strokeWidth="3" />;
  const fillWell = (
    <g>
      <rect x="42" y="1" width="43" height="43" fill={fill || '#fff'} stroke="#000" strokeWidth="2" />
      {!fill && slash(43, 2, 41, 41)}
    </g>
  );
  const strokeWell = (
    <g>
      <rect x="61" y="20" width="44" height="44" fill={stroke || '#fff'} stroke="#000" strokeWidth="2" />
      {!stroke && slash(62, 21, 42, 42)}
      <rect x="74" y="33" width="18" height="18" fill="#2b2b2b" stroke="#000" strokeWidth="2" />
    </g>
  );
  return (
    <svg width="108" height="68" viewBox="0 0 108 68">
      <g transform="translate(7 6) scale(1.050)" color="#aaa" fill="currentColor">{icons.dropper}</g>
      <rect x="3" y="39" width="29" height="24" fill="#000" stroke="#aaa" strokeWidth="2" />
      <path d="M4 51h27v11H4z" fill="#fff" stroke="#aaa" strokeWidth="1.500" />
      <rect x="42" y="47" width="16" height="16" fill="#fff" stroke="#aaa" />
      <path d="M43 62l14-14" stroke="#b04060" strokeWidth="1.500" />
      {strokeFront ? <>{fillWell}{strokeWell}</> : <>{strokeWell}{fillWell}</>}
      <path d="M91 8c6-2 9 2 9 7" fill="none" stroke="#aaa" strokeWidth="3" />
      <path d="M87 8l6-6v12zM94 13h12l-6 7z" fill="#aaa" />
    </svg>
  );
}

const serif = 'Liberation Serif, serif';
const sans = 'Liberation Sans, sans-serif';
const glyph = {
  size: <svg width="34" height="28" viewBox="0 0 34 28"><text x="0" y="24" fontFamily={serif} fontWeight="700" fontSize="19">T</text><text x="11" y="24" fontFamily={serif} fontWeight="700" fontSize="31">T</text></svg>,
  lead: <svg width="30" height="28" viewBox="0 0 30 28"><path d="M6 8v16" stroke="#aaa" strokeWidth="2" /><path d="M6 5l4 6H2zM6 27l4-6H2z" /><text x="13" y="13" fontFamily={serif} fontSize="17">A</text><path d="M12 14h16M12 27h16" stroke="#aaa" strokeWidth="1.500" /><text x="13" y="26" fontFamily={serif} fontSize="17">A</text></svg>,
  kern: <svg width="30" height="28" viewBox="0 0 30 28"><text x="1" y="18" fontFamily={sans} fontSize="18" textLength="26">V/A</text><path d="M15 24h10M15 24l4-3v6z" stroke="#aaa" /></svg>,
  track: <svg width="30" height="28" viewBox="0 0 30 28"><rect x="1" y="2" width="28" height="17" /><text x="3" y="17" fill="#222" fontFamily={sans} fontWeight="700" fontSize="16" textLength="24">VA</text><path d="M2 24h26M2 24l4-3v6zM28 24l-4-3v6z" stroke="#aaa" /></svg>,
  lines: <svg width="22" height="22" viewBox="0 0 22 22"><path d="M0 1h22v2H0zM0 8h22v4H0zM0 16h22v5H0z" /></svg>,
  tall: <svg width="30" height="28" viewBox="0 0 30 28"><path d="M5 5v18" stroke="#aaa" strokeWidth="2" /><path d="M5 1l4 6H1zM5 27l4-6H1z" /><text x="9" y="24" fontFamily={serif} fontWeight="700" fontSize="30" textLength="19" lengthAdjust="spacingAndGlyphs">T</text></svg>,
  wide: <svg width="30" height="30" viewBox="0 0 30 30"><text x="5" y="21" fontFamily={serif} fontWeight="700" fontSize="27">T</text><path d="M3 26h24M3 26l5-4v8zM27 26l-5-4v8z" stroke="#aaa" /></svg>,
  base: <svg width="30" height="28" viewBox="0 0 30 28"><text x="2" y="20" fontFamily={sans} fontSize="19">A</text><text x="16" y="13" fontFamily={sans} fontSize="14">a</text><path d="M1 22h14M15 15h11M21 26v-8M21 17l-3 4h6z" stroke="#aaa" /></svg>,
  tsume: <svg width="30" height="28" viewBox="0 0 30 28"><text x="7" y="16" fontFamily="Noto Sans CJK JP, sans-serif" fontSize="16">あ</text><path d="M5 2v17M25 2v17" stroke="#aaa" strokeDasharray="2 1.500" /><path d="M3 24h7M27 24h-7M10 24l-3-3v6zM20 24l3-3v6z" stroke="#aaa" /></svg>,
};

const GlyphHold = styled.div`
  margin-left: ${(p) => p.$m || -15}px;
  height: 28px;
  display: flex;
  align-items: center;
  svg { overflow: visible; fill: #b0b0b0; }
`;
const Pair = ({ v, unit, off }) => (
  <Inline $g={7}>
    <T $c={off ? '#5a5a5a' : blue}>{v}</T>
    {unit && <T>{unit}</T>}
  </Inline>
);
const CharRow = ({ h, a, b }) => (
  <Track $h={h} $x={[18.5, 43, 115, 177, 211, 284]}>
    <GlyphHold>{glyph[a.g]}</GlyphHold>
    <Pair {...a} />
    <Icon n="tri" s={13} c="#999" />
    <GlyphHold>{glyph[b.g]}</GlyphHold>
    <Pair {...b} />
    <Icon n="tri" s={13} c="#999" />
  </Track>
);

function Side({ char }) {
  return (
    <SideColumn>
      <Stack>
        {[['Info', 28], ['Audio', 42], ['Preview', 58], ['Effects & Presets', 122], ['Align', 37], ['Libraries', 63]].map(([t, w], i) => (
          <Fold key={t} $h={i ? 45 : 44}><T w={w}>{t}</T></Fold>
        ))}
        <CharBox $focus={char.focus}>
          <Track $h={41} $x={[15, 284]}>
            <T w={71} $c="#cccccc">Character</T>
            <Icon n="burger" s={14} />
          </Track>
          <FontBlock>
            <FontSelects>
              {[['DIN Condensed', 114], ['Bold', 32]].map(([t, w]) => (
                <Inline key={t}>
                  <Box $w={157} $h={27} $j="flex-start" $p="0 0 0 9px" $bg="#171717" $line="#2e2e2e"><T w={w} $c="#d0d0d0">{t}</T></Box>
                  <Box $w={26} $h={27} $bg="#1b1b1b" $line="#2e2e2e"><Icon n="down" s={13} flow /></Box>
                </Inline>
              ))}
            </FontSelects>
            <Inset $l={3} $h={68}><Wells {...char} /></Inset>
          </FontBlock>
          <CharGroup $h={76}>
            <CharRow h={38} a={{ g: 'size', v: '296', unit: 'px' }} b={{ g: 'lead', v: 'Auto' }} />
            <CharRow h={26} a={{ g: 'kern', v: 'Metrics', off: char.auto }} b={{ g: 'track', v: '25' }} />
          </CharGroup>
          <CharGroup $h={46}>
            <Track $h={43} $x={[18.5, 43, 115, 127]}>
              <GlyphHold $m={-11}>{glyph.lines}</GlyphHold>
              <Pair v={char.width} unit="px" />
              <Icon n="tri" s={13} c="#999" />
              <Select w={171} h={27} label={char.order || ''} tw={char.order ? 110 : 0} />
            </Track>
          </CharGroup>
          <CharGroup $h={78}>
            <CharRow h={40} a={{ g: 'tall', v: '100', unit: '%' }} b={{ g: 'wide', v: '100', unit: '%' }} />
            <CharRow h={25} a={{ g: 'base', v: '0', unit: 'px' }} b={{ g: 'tsume', v: '0', unit: '%' }} />
          </CharGroup>
          <CharGroup $h={50}>
            <Track $h={46} $x={[52, 90, 135, 173, 218, 256]}>
              <GlyphT $mid $b $s={24}>T</GlyphT>
              <GlyphT $mid $i $s={24}>T</GlyphT>
              <GlyphT $mid $s={24}>TT</GlyphT>
              <GlyphT $mid $s={24}>T<small>T</small></GlyphT>
              <GlyphT $mid $s={24}>T<sup>1</sup></GlyphT>
              <GlyphT $mid $s={24}>T<sub>1</sub></GlyphT>
            </Track>
          </CharGroup>
        </CharBox>
        <Fold $h={43}><T w={74}>Paragraph</T></Fold>
        <Fold><T w={53}>Tracker</T></Fold>
      </Stack>
      <SideScroll><SideThumb /></SideScroll>
    </SideColumn>
  );
}

/* ---------- timeline ---------- */

const TimelineFrame = styled.div`
  position: relative;
  display: flex;
  flex-direction: column;
  flex: 1;
  min-height: 0;
  background: #262626;
  border: 2px solid ${(p) => (p.$focus ? focusBlue : '#262626')};
  border-left-color: ${(p) => (p.$focus ? focusBlue : '#1a1a1a')};
  overflow: hidden;
`;
const TimelineBody = styled.div`
  display: flex;
  flex: 1;
  min-height: 0;
`;
const LayersSide = styled.div`
  display: flex;
  flex-direction: column;
  width: 914px;
  flex: none;
`;
const TimeStack = styled.div`
  display: flex;
  flex-direction: column;
  align-items: center;
  width: 118px;
  gap: 1px;
`;
const LayerRow = styled.div`
  height: 24px;
  background: #444;
  border-bottom: 1px solid #222;
  flex: none;
`;
const Sliver = styled.div`
  display: flex;
  flex-direction: column;
  justify-content: flex-end;
  height: ${(p) => p.$h}px;
  overflow: hidden;
  flex: none;
`;
const Sq = styled.i`
  width: 19px;
  height: 22px;
  background: ${(p) => p.$c || '#333'};
`;
const EyeCell = styled.div`
  display: flex;
  align-items: center;
  justify-content: center;
  width: 20px;
  height: 22px;
  margin-left: -10px;
  background: ${(p) => p.$bg || '#383838'};
`;
const NameBox = styled.div`
  display: flex;
  align-items: center;
  width: 282px;
  height: 23px;
  padding-left: 3px;
  border: 2px solid #b9b9b9;
  background: #555;
`;
const PropRow = styled.div`
  height: 25.7px;
  border-bottom: 2px solid #1c1c1c;
  flex: none;
`;
const TimeSide = styled.div`
  position: relative;
  display: flex;
  flex-direction: column;
  width: 976px;
  border-left: 2px solid #0b0b0b;
  overflow: hidden;
  flex: none;
`;
const Nav = styled.div`
  display: flex;
  height: ${(p) => p.$h}px;
  border-top: 2px solid #0b0b0b;
  border-bottom: 2px solid #0b0b0b;
  margin-top: ${(p) => p.$t || 0}px;
  flex: none;
`;
const Cap = styled.i`
  width: ${(p) => p.$w || 9}px;
  background: #4390dc;
  border-radius: ${(p) => (p.$right ? '0 9px 9px 0' : '9px 0 0 9px')};
`;
const Bar = styled.div`
  width: 955px;
  height: 100%;
  background: ${(p) => p.$bg};
`;
const Ruler = styled.div`
  display: flex;
  height: 29px;
  margin-left: -31px;
  flex: none;
`;
const RulerCell = styled.div`
  display: flex;
  flex-direction: column;
  align-items: center;
  justify-content: flex-end;
  width: 79.5px;
  height: 29px;
  flex: none;
  span { line-height: 18px; }
  &::after {
    content: '';
    width: 1.5px;
    height: ${(p) => (p.$major ? 8 : 6)}px;
    background: #a0a0a0;
  }
`;
const CacheLine = styled.div`
  display: flex;
  height: 7px;
  padding-left: 9px;
  background: #161616;
  border-bottom: 2px solid #0c0c0c;
  flex: none;
`;
const Cached = styled.i`
  width: ${(p) => p.$w}px;
  margin-left: ${(p) => p.$l || 0}px;
  background: #42e33c;
`;
const ClipRow = styled.div`
  display: flex;
  height: ${(p) => p.$h}px;
  padding-left: 9px;
  background: #444;
  flex: none;
`;
const Clip = styled.div`
  width: 955px;
  height: 100%;
  border-top: 1px solid #bf6a80;
  background: linear-gradient(#9d3553, #832c45);
`;
const Lanes = styled.div`
  width: 955px;
  flex: 1;
  margin-left: 9px;
  background: #333;
  border-top: ${(p) => (p.$line ? '2px solid #222' : 'none')};
`;
const Lane = styled.div`
  height: 25.7px;
  border-bottom: 2px solid #1f1f1f;
`;
const Beam = styled.div`
  width: 7px;
  height: 17px;
  margin-left: -3px;
  border: solid #999;
  border-width: 2px 0;
  background: linear-gradient(90deg, transparent 3px, #999 3px 4px, transparent 4px);
`;
const Playhead = styled.div`
  position: absolute;
  left: ${(p) => p.$x}px;
  top: 33px;
  bottom: 0;
  width: 2px;
  background: linear-gradient(transparent 14px, #4a9ae6 14px);
  svg { position: absolute; left: -8px; top: 0; }
`;
const FrameSpan = styled.div`
  position: absolute;
  left: ${(p) => p.$x}px;
  top: ${(p) => p.$t}px;
  bottom: 0;
  width: 15px;
  background: #ffffff18;
`;
const EndGutter = styled.div`
  display: flex;
  flex-direction: column;
  align-items: center;
  gap: 13px;
  flex: 1;
  padding-top: 57px;
  background: linear-gradient(#262626 110px, #1c1c1c 110px);
`;
const EndThumb = styled.div`
  width: 22px;
  height: 164px;
  margin-top: -13px;
  border-radius: 8px;
  background: #303030;
`;
const BottomBar = styled.div`
  height: 26px;
  border-top: 2px solid #0c0c0c;
  background: linear-gradient(90deg, #262626 1075px, #1e1e1e 1075px);
  flex: none;
`;
const Knob = styled.div`
  width: 66px;
  height: 14px;
  margin-left: -7px;
  display: flex;
  align-items: center;
  &::before { content: ''; width: 14px; height: 14px; border: 2px solid #aaa; border-radius: 50%; }
  &::after { content: ''; flex: 1; height: 3px; background: #555; }
`;

const ruler = ['0:00f', '05f', '10f', '15f', '20f', '25f', '01:00f', '05f', '10f', '15f', '20f', '25f', '02:00f'];

function Layer() {
  return (
    <LayerRow>
      <Track $x={[18, 52, 75, 114, 128, 159, 212, 227, 525, 548, 570, 628, 651, 674, 730, 749]}>
        <EyeCell><Icon n="eye" s={16} flow c="#b5b5b5" /></EyeCell>
        <Sq /><Sq />
        <Icon n="right" s={15} c="#aaa" />
        <Sq $c={crimson} />
        <T $b={600}>1</T>
        <GlyphHold $m={-7}><GlyphT $s={22} $b>T</GlyphT></GlyphHold>
        <NameBox><T w={203} $b={600} $c="#bcbcbc">How to Add a Stroke in AE</T></NameBox>
        <EyeCell $bg="#333"><Icon n="shySm" s={15} flow /></EyeCell>
        <EyeCell $bg="#3a3a3a"><Icon n="sun" s={15} flow c="#777" /></EyeCell>
        <EyeCell $bg="#333"><Icon n="slash" s={15} flow c="#c0c0c0" /></EyeCell>
        <Sq /><Sq /><Sq />
        <Icon n="whip" s={16} />
        <Box $w={135} $h={22} $r={0} $j="space-between" $p="0 7px 0 9px" $bg="#1d1d1d"><T w={39} $c="#cacaca">None</T><Icon n="down" s={14} flow /></Box>
      </Track>
    </LayerRow>
  );
}

const eyeCell = <EyeCell $bg="#1c1c1c"><Icon n="eye" s={16} flow c="#b5b5b5" /></EyeCell>;
const spiral = <Icon n="whip" s={16} />;

function Properties() {
  return (
    <>
      <PropRow><Track $x={[142.5, 160, 620, 698]}><Icon n="down" s={13} /><T w={31}>Text</T><T w={68}>Animate:</T><Icon n="play" s={16} c="#b8b8b8" /></Track></PropRow>
      <PropRow><Track $x={[191, 209, 749]}><Icon n="watch" s={19} /><T w={85}>Source Text</T>{spiral}</Track></PropRow>
      <PropRow><Track $x={[18, 166, 186]}>{eyeCell}<Icon n="right" s={14} /><T w={95}>Path Options</T></Track></PropRow>
      <PropRow><Track $x={[166, 186]}><Icon n="right" s={14} /><T w={101}>More Options</T></Track></PropRow>
      <PropRow><Track $x={[18, 168.5, 186, 651, 698]}>{eyeCell}<Icon n="down" s={13} /><T w={82}>Animator 1</T><T w={34}>Add:</T><Icon n="play" s={16} c="#b8b8b8" /></Track></PropRow>
      <PropRow><Track $x={[18, 192, 211]}>{eyeCell}<Icon n="right" s={14} /><T w={123}>Range Selector 1</T></Track></PropRow>
      <PropRow>
        <Track $x={[16, 39, 62, 192, 217, 243, 259, 515, 554, 749]}>
          <Icon n="prev" s={12} c="#4a4a4a" /><Icon n="key" s={15} /><Icon n="next" s={12} />
          <Icon n="right" s={14} /><Icon n="watch" s={19} c="#3f86d0" /><Icon n="axis" s={15} />
          <Box $w={252} $h={23} $r={0} $bg="#494949" $j="flex-start" $p="0 0 0 3px"><T w={92}>Stroke Color</T></Box>
          <Box $w={37} $h={22} $r={0} $bg="#3388c0" $line="#999" />
          <Box $w={36} $h={22} $r={0} $bg="#1c1c1c" $line="#999"><Icon n="dropper" s={16} flow c="#c8c8c8" /></Box>
          {spiral}
        </Track>
      </PropRow>
      <PropRow><Track $x={[140, 160, 516]}><Icon n="right" s={14} /><T w={74}>Transform</T><T w={40} $c={blue}>Reset</T></Track></PropRow>
    </>
  );
}

function Timeline({ focus, time, frame, props, cached, head }) {
  return (
    <TimelineFrame $focus={focus}>
      <TabLine $h={37} $l={0}>
        <Tab $w={205} $t={1}><Track $x={[40]}><T w={105} $c={soft}>Render Queue</T></Track></Tab>
        <Tab $on $w={162} $t={1}>
          <Track $x={[4, 22, 54, 154]}>
            <Icon n="cross" s={9} />
            <Swatch $up={-3} />
            <T w={80} $c="#cfcfcf">Add Stroke</T>
            <Icon n="burger" s={14} c="#b0b0b0" />
          </Track>
        </Tab>
      </TabLine>
      <TimelineBody>
        <LayersSide>
          <Track $h={57} $x={[15, 150, 647, 697, 748, 787, 826, 877]}>
            <TimeStack>
              <T w={110} $s={21} $b={600} $c="#4a9cd6">{time}</T>
              <T w={117} $s={14.5} $c="#3079aa">{frame}</T>
            </TimeStack>
            <Box $w={461} $h={28} $j="flex-start" $p="0 0 0 10px" $bg="#161616" $line="#2c2c2c"><Icon n="findMenu" s={22} flow /></Box>
            <Icon n="miniFlow" s={19} />
            <Icon n="draft3d" s={20} />
            <Icon n="shy" s={20} c="#3f86d0" />
            <Icon n="frames" s={20} />
            <Icon n="blur" s={20} />
            <Icon n="graph" s={21} />
          </Track>
          <HeadRow $h={29}>
            <Track $x={[17, 40, 62, 84, 102, 131, 150, 159, 200, 208, 509, 525, 548, 570, 585, 615, 638, 661, 683, 713, 722, 890]}>
              <Icon n="eye" s={16} />
              <Icon n="speaker" s={16} />
              <Icon n="dot" s={16} />
              <Icon n="lock" s={16} />
              <Rule $h={22} />
              <Icon n="tag" s={18} />
              <Rule $h={22} />
              <T $s={14} $c={soft}>#</T>
              <Rule $h={22} />
              <T w={74} $s={15} $c={soft}>Layer Name</T>
              <Rule $h={22} />
              <Icon n="shySm" s={15} />
              <Icon n="sun" s={15} />
              <Icon n="dash" s={15} />
              <GlyphT $i $s={20}>fx</GlyphT>
              <Icon n="frames" s={15} />
              <Icon n="blur" s={16} />
              <Icon n="halfDisc" s={17} />
              <Icon n="cube" s={17} />
              <Rule $h={22} />
              <T w={84} $s={15} $c={soft}>Parent &amp; Link</T>
              <Rule $h={22} />
            </Track>
          </HeadRow>
          <Sliver $h={props ? 5 : 24}><Layer /></Sliver>
          {props && <Properties />}
        </LayersSide>
        <TimeSide>
          <Nav $h={15} $t={11}><Cap /><Bar $bg="#686868" /><Cap $right /></Nav>
          <Ruler>
            {ruler.map((t, i) => <RulerCell key={i} $major={i % 6 === 0}><T $s={15} $c={soft}>{t}</T></RulerCell>)}
          </Ruler>
          <Nav $h={24}><Cap $w={9} /><Bar $bg="#5e5e5e" /><Cap $right $w={7} /></Nav>
          <CacheLine>{cached.map(([l, w]) => <Cached key={l} $l={l} $w={w} />)}</CacheLine>
          <ClipRow $h={props ? 5 : 24}><Clip /></ClipRow>
          <Lanes $line={!props}>
            {props && [0, 1, 2, 3, 4, 5, 6, 7].map((i) => (
              <Lane key={i}>
                {i === 6
                  ? <Track $x={[49, 541]}><Icon n="keyFull" s={13} h={16} c="#b4b4b4" /><Icon n="keyFull" s={13} h={16} c="#3f86d0" /></Track>
                  : <Track $x={[17]}><Beam /></Track>}
              </Lane>
            ))}
          </Lanes>
          <FrameSpan $x={head - (props ? 14 : -1)} $t={props ? 91 : 111} />
          <Playhead $x={head}>
            <svg width="18" height="20" viewBox="0 0 18 20"><path d="M0 0h18v8l-9 12-9-12z" fill="#4390dc" /><path d="M7 7v2M11 7v2" stroke="#1f4f86" strokeWidth="1.500" /></svg>
          </Playhead>
        </TimeSide>
        <EndGutter>
          <Icon n="marker" s={17} h={22} flow />
          <Icon n="shapes" s={18} flow />
          {props && <EndThumb />}
        </EndGutter>
      </TimelineBody>
      {props && (
        <BottomBar>
          <Track $x={[18, 46, 73, 512.5, 929, 962, 1056]}>
            <Icon n="layersBlue" s={17} c="#4a90d9" />
            <Icon n="toggles" s={16} />
            <Icon n="braces" s={17} />
            <Box $w={201} $h={22} $bg="#1c1c1c" $line="#2e2e2e"><T w={182} $c="#bababa">Toggle Switches / Modes</T></Box>
            <Icon n="smallHill" s={18} />
            <Knob />
            <Icon n="bigHill" s={20} />
          </Track>
        </BottomBar>
      )}
    </TimelineFrame>
  );
}

/* ---------- Window menu ---------- */

const Menu = styled.div`
  position: absolute;
  left: 840px;
  top: 38px;
  width: 531px;
  height: 1080px;
  padding: 7.5px 21px 0;
  border-radius: 7px;
  box-shadow: 0 0 14px #0008;
  background:
    radial-gradient(380px 90px at 68% 290px, #e4dad088, transparent),
    radial-gradient(300px 80px at 95% 490px, #e4d9cc88, transparent),
    linear-gradient(#acacad 0, #a6a6a8 70px, #a4a4a6 125px, #cfcfd0 170px, #e0dfdf 210px, #e5dfdd 270px, #e3dedc 320px,
      #e3e1e1 400px, #e6dfdd 480px, #e3dcda 530px, #e2e1e2 600px, #dfdfe0 665px, #c0c0c2 710px, #a5a5a7 760px, #a0a0a2 840px,
      #a89fa4 890px, #ab9da4 940px, #a3999e 1040px);
`;
const Entry = styled.div`
  display: flex;
  align-items: center;
  height: 33px;
`;
const TickCell = styled.div`
  width: 16px;
  display: flex;
  margin-left: -6px;
  margin-right: 6px;
`;
const EntryText = styled.div`
  flex: 1;
`;
const Short = styled.div`
  display: flex;
  align-items: center;
  gap: 6px;
`;
const Line = styled.div`
  height: 17px;
  display: flex;
  align-items: center;
  &::after { content: ''; flex: 1; height: 1.5px; background: #00000026; }
`;

const entries = [
  ['Workspace', 99, 0, '>'], ['Assign Shortcut to “Default” Workspace', 362, 0, '>'], null,
  ['Find Extensions on Exchange...', 279], null,
  ['Extensions', 97, 0, '>'], null,
  ['Align', 44, 1], ['Audio', 50, 1, '4'], ['Brushes', 73, 1, '9'], ['Character', 89, 1, '6'], ['Content-Aware Fill', 166],
  ['Effects & Presets', 155, 0, '5'], ['Essential Graphics', 166], ['Info', 33, 1, '2'], ['Learn', 50], ['Libraries', 77, 1],
  ['Lumetri Scopes', 141], ['Mask Interpolation', 167], ['Media Browser', 133], ['Metadata', 85], ['Motion Sketch', 129],
  ['Paint', 44, 1, '8'], ['Paragraph', 92, 1, '7'], ['Preview', 70, 1, '3'], ['Progress', 80], ['Smoother', 88],
  ['Tools', 47, 1, '1'], ['Tracker', 67, 1], ['Wiggler', 69], null,
  ['Composition: Add Stroke', 225, 1], ['Effect Controls: How to Add a Stroke in AE', 383], ['Flowchart: (none)', 156],
];

function WindowMenu() {
  return (
    <Menu>
      {entries.map((e, i) => (e ? (
        <Entry key={i}>
          <TickCell><Icon n={e[2] ? 'tick' : 'none'} s={15} flow c="#151515" /></TickCell>
          <EntryText><T w={e[1]} $f={mac} $s={18} $b={500} $c="#232325">{e[0]}</T></EntryText>
          {e[3] === '>' && <Icon n="menuRight" s={14} flow c="#111" />}
          {e[3] && e[3] !== '>' && (
            <Short>
              <T $f="'DejaVu Sans', sans-serif" $s={16} $c="#00000055">⌘</T>
              <T $f={mac} $s={17.5} $c="#00000055">{e[3]}</T>
            </Short>
          )}
        </Entry>
      ) : <Line key={i} />))}
    </Menu>
  );
}

/* ---------- desktop ---------- */

const Screen = styled.section`
  position: relative;
  width: 1920px;
  height: 1080px;
  overflow: hidden;
  flex: none;
`;
const AppWindow = styled.div`
  display: flex;
  flex-direction: column;
  height: ${(p) => 1080 + (p.$up || 0)}px;
  margin-top: ${(p) => -(p.$up || 0)}px;
  background: #171717;
`;
const Workspace = styled.div`
  display: flex;
  height: 725px;
  gap: 6.5px;
  margin-bottom: 6px;
  flex: none;
`;
const Cursor = styled.svg`
  position: absolute;
  left: ${(p) => p.$x}px;
  top: ${(p) => p.$y}px;
  width: 17px;
  height: 27px;
`;

const screens = [
  {
    menuOpen: true, look: 'plain', compFocus: true, time: '0:00:00:00', frame: '00000 (30.00 fps)', cached: [], head: 9, cursor: [1744, 375],
    char: { fill: '#dac29d', width: '-' },
  },
  {
    look: 'strokeOver', time: '0:00:00:00', frame: '00000 (30.00 fps)', cached: [[0, 955]], head: 9, cursor: [1788, 602],
    char: { focus: true, fill: '#cf8a35', stroke: '#6f90c8', strokeFront: true, width: '15', order: 'Stroke Over Fill', auto: true },
  },
  {
    look: 'outline', time: '0:00:00:00', frame: '00000 (30.00 fps)', cached: [[0, 955]], head: 9, cursor: [1789, 390],
    char: { focus: true, stroke: '#6f90c8', width: '17', auto: true },
  },
  {
    up: 120, look: 'fillOver', timeFocus: true, props: true, time: '0:00:00:02', frame: '00002 (30.00 fps)',
    cached: [[0, 63], [477, 415]], head: 40.5, cursor: [957, 801],
    char: { fill: '#cf8a35', stroke: '#6f90c8', width: '17', order: 'Fill Over Stroke', auto: true },
  },
];

export default function App() {
  return (
    <>
      <Global />
      <Viewport>
        <Strip>
          {screens.map((s, i) => (
            <Screen key={i}>
              <AppWindow $up={s.up}>
                <TopBars menuOpen={s.menuOpen} />
                <Workspace>
                  <ProjectPanel />
                  <CompPanel focus={s.compFocus} look={s.look} time={s.time} />
                  <Side char={s.char} />
                </Workspace>
                <Timeline focus={s.timeFocus} time={s.time} frame={s.frame} props={s.props} cached={s.cached} head={s.head} />
              </AppWindow>
              {s.menuOpen && <WindowMenu />}
              <Cursor $x={s.cursor[0]} $y={s.cursor[1]} viewBox="0 0 17 27">
                <path d="M1 1v20l5-4 3.500 8.500 4-1.500L10 15.500h6z" fill="#111" stroke="#ddd" strokeWidth="1.500" />
              </Cursor>
            </Screen>
          ))}
        </Strip>
      </Viewport>
    </>
  );
}
